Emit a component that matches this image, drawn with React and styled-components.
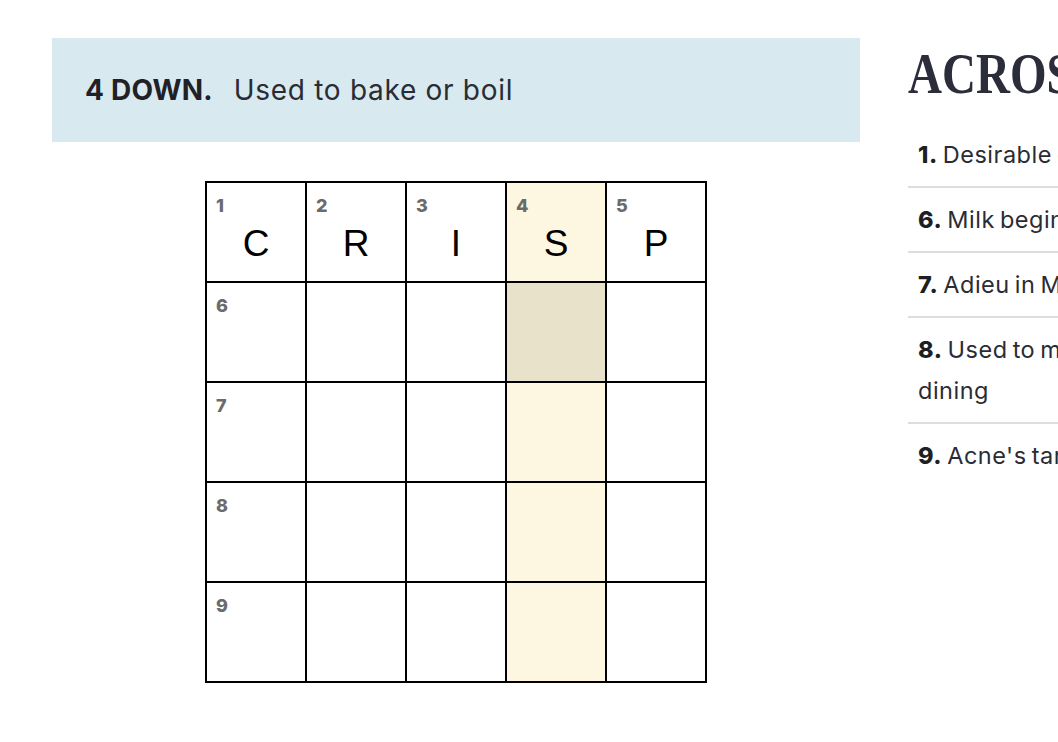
import React from 'react';
import styled, { createGlobalStyle } from 'styled-components';

const GlobalStyle = createGlobalStyle`
  html, body {
    margin: 0;
    padding: 0;
    overflow: hidden;
    background: #ffffff;
  }
  * {
    box-sizing: border-box;
  }
`;

const grid = [
  [{ n: 1, l: 'C' }, { n: 2, l: 'R' }, { n: 3, l: 'I' }, { n: 4, l: 'S' }, { n: 5, l: 'P' }],
  [{ n: 6 }, {}, {}, {}, {}],
  [{ n: 7 }, {}, {}, {}, {}],
  [{ n: 8 }, {}, {}, {}, {}],
  [{ n: 9 }, {}, {}, {}, {}],
];

const acrossClues = [
  { n: 1, text: 'Desirable quality of chips' },
  { n: 6, text: 'Milk beginning?' },
  { n: 7, text: 'Adieu in Mexico' },
  { n: 8, text: 'Used to make wine, before dining' },
  { n: 9, text: "Acne's target" },
];

const activeCol = 3;
const activeRow = 1;

const App = () => {
  return (
    <>
      <GlobalStyle />
      <Page>
        <Board>
          <ClueBar>
            <ClueLabel>4 DOWN.</ClueLabel>
            <ClueText>Used to bake or boil</ClueText>
          </ClueBar>
          <Grid>
            {grid.map((row, r) =>
              row.map((cell, c) => (
                <Cell
                  key={`${r}-${c}`}
                  $highlight={c === activeCol}
                  $active={c === activeCol && r === activeRow}
                >
                  {cell.n && <CellNumber>{cell.n}</CellNumber>}
                  {cell.l}
                </Cell>
              ))
            )}
          </Grid>
        </Board>
        <Sidebar>
          <Heading>ACROSS</Heading>
          <ClueList>
            {acrossClues.map((clue) => (
              <ClueItem key={clue.n}>
                <strong>{clue.n}.</strong> {clue.text}
              </ClueItem>
            ))}
          </ClueList>
        </Sidebar>
      </Page>
    </>
  );
};

export default App;

const Page = styled.main`
  display: flex;
  gap: 48px;
  padding: 38px 0 0 52px;
  width: 1400px;
  font-family: Inter, 'Noto Sans', sans-serif;
  color: #2a2c33;
`;

const Board = styled.section`
  width: 808px;
  flex-shrink: 0;
  display: flex;
  flex-direction: column;
  align-items: center;
`;

const ClueBar = styled.div`
  width: 100%;
  height: 104px;
  display: flex;
  align-items: center;
  padding: 0 33px;
  background: #d8e9f0;
  font-size: 28px;
`;

const ClueLabel = styled.span`
  font-weight: 700;
  color: #1f2127;
  margin-right: 21px;
  letter-spacing: 0.2px;
`;

const ClueText = styled.span`
  color: #2a2c33;
  letter-spacing: 0.7px;
`;

const Grid = styled.div`
  margin-top: 39px;
  display: grid;
  grid-template-columns: repeat(5, 100px);
  grid-auto-rows: 100px;
  border-left: 2px solid #000;
  border-top: 2px solid #000;
`;

const Cell = styled.div`
  position: relative;
  display: flex;
  align-items: center;
  justify-content: center;
  padding-top: 24px;
  border-right: 2px solid #000;
  border-bottom: 2px solid #000;
  background: ${({ $active, $highlight }) =>
    $active ? '#e9e2cb' : $highlight ? '#fdf6e0' : '#ffffff'};
  font-family: 'Liberation Sans', Arial, sans-serif;
  font-size: 37px;
  color: #000;
`;

const CellNumber = styled.span`
  position: absolute;
  top: 12px;
  left: 9px;
  font-family: Inter, 'Noto Sans', sans-serif;
  font-size: 18px;
  font-weight: 800;
  color: #6b6b6b;
`;

const Sidebar = styled.aside`
  width: 380px;
  flex-shrink: 0;
`;

const Heading = styled.h2`
  margin: 8px 0 21px;
  font-family: 'Liberation Serif', 'Times New Roman', serif;
  font-size: 56px;
  line-height: 56px;
  font-weight: 700;
  color: #2b2d3a;
  transform: scaleX(0.84);
  transform-origin: left center;
`;

const ClueList = styled.ul`
  list-style: none;
  margin: 0;
  padding: 0;
`;

const ClueItem = styled.li`
  padding: 11px 10px;
  font-size: 23.5px;
  line-height: 41px;
  letter-spacing: 0.5px;
  word-spacing: -2px;
  color: #2a2c33;
  border-bottom: 2px solid #dddddd;

  &:last-child {
    border-bottom: none;
  }

  strong {
    font-weight: 800;
    color: #1d1f24;
  }
`;
